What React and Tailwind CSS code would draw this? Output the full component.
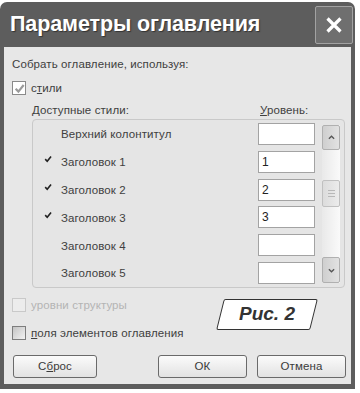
const rows = [
  { name: 'Верхний колонтитул', level: '', checked: false },
  { name: 'Заголовок 1', level: '1', checked: true },
  { name: 'Заголовок 2', level: '2', checked: true },
  { name: 'Заголовок 3', level: '3', checked: true },
  { name: 'Заголовок 4', level: '', checked: false },
  { name: 'Заголовок 5', level: '', checked: false },
];

const Tick = ({ className }) => (
  <svg viewBox="0 0 10 10" className={className}>
    <path d="M1.5 5.2 L4 7.8 L8.8 1.8" fill="none" stroke="currentColor" strokeWidth="2" />
  </svg>
);

const Checkbox = ({ checked = false, disabled = false }) => (
  <div
    className={`w-[14px] h-[14px] border flex items-center justify-center ${
      disabled
        ? 'border-[#c9c9c9] bg-[#ececec]'
        : checked
        ? 'border-[#8a8a8a] bg-white'
        : 'border-[#7d7d7d] bg-gradient-to-br from-[#c4c4c4] to-[#f2f2f2]'
    }`}
  >
    {checked && <Tick className="w-[11px] h-[11px] text-[#9a9a9a]" />}
  </div>
);

const Button = ({ children, className = '' }) => (
  <div
    className={`h-[23px] rounded-[3px] border border-[#6a6a6a] bg-gradient-to-b from-[#fbfbfb] to-[#e2e2e2] flex items-center justify-center text-[#3a3a3a] text-[11.5px] ${className}`}
  >
    {children}
  </div>
);

export default function App() {
  return (
    <div className="w-[360px] h-[393px] bg-white pt-[2px] relative" style={{ fontFamily: '"Liberation Sans", Arial, sans-serif' }}>
      <div className="w-[355px] h-[387px] bg-[#5d5d5d] rounded-t-[7px] flex flex-col px-[4px] pb-[5px]">
        {/* title bar */}
        <div className="h-[45px] flex items-center justify-between pl-[6px]">
          <span className="text-white font-bold text-[21.5px] tracking-[-0.1px] [text-shadow:1px_1px_1px_#333]">
            Параметры оглавления
          </span>
          <div className="w-[38px] h-[38px] mr-[-2px] mt-[1px] border border-[#a2a2a2] rounded-[2px] bg-[#6f6f6f] flex items-center justify-center">
            <svg viewBox="0 0 20 20" className="w-[20px] h-[20px]">
              <path d="M3.5 3.5 L16.5 16.5 M16.5 3.5 L3.5 16.5" stroke="white" strokeWidth="3.2" fill="none" />
            </svg>
          </div>
        </div>

        {/* body */}
        <div className="flex-1 bg-[#e7e7e7] flex flex-col pl-[8px] pr-[5px] text-[11.5px] tracking-[0.1px] text-[#404040]">
          <div className="mt-[10px] leading-[14px]">Собрать оглавление, используя:</div>

          <div className="mt-[10px] flex items-center gap-[5px] leading-[14px]">
            <Checkbox checked />
            <span>
              с<span className="underline">т</span>или
            </span>
          </div>

          <div className="mt-[8px] flex leading-[14px] pl-[20px]">
            <span className="w-[228px]">Доступные стили:</span>
            <span>
              <span className="underline">У</span>ровень:
            </span>
          </div>

          {/* list */}
          <div className="mt-[2px] ml-[20px] w-[313px] h-[169px] border border-[#c9c9c9] rounded-[4px] bg-[#e5e5e5] flex">
            <div className="flex flex-col w-[284px]">
              {rows.map((r) => (
                <div key={r.name} className="h-[28px] flex items-center">
                  <div className="w-[28px] flex justify-center pl-[2px]">
                    {r.checked && <Tick className="w-[8px] h-[8px] text-[#222] -mt-[5px]" />}
                  </div>
                  <span className="w-[197px] pt-[2px]">{r.name}</span>
                  <div className="w-[57px] h-[22px] border border-[#a3a3a3] bg-white flex items-center pl-[3px] text-[12px] text-[#222]">
                    {r.level}
                  </div>
                </div>
              ))}
            </div>
            {/* scrollbar */}
            <div className="ml-[5px] mt-[5px] w-[18px] h-[158px] flex flex-col bg-gradient-to-r from-[#e9e9e9] to-[#fafafa]">
              <div className="h-[25px] rounded-[2px] border border-[#b0b0b0] bg-gradient-to-r from-[#cfcfcf] to-[#e2e2e2] flex items-center justify-center">
                <svg viewBox="0 0 8 5" className="w-[7px] h-[5px]">
                  <path d="M1 4 L4 1 L7 4" stroke="#555" strokeWidth="1.5" fill="none" />
                </svg>
              </div>
              <div className="h-[30px]" />
              <div className="h-[27px] rounded-[2px] border border-[#c0c0c0] bg-gradient-to-r from-[#dcdcdc] to-[#ececec] flex flex-col items-center justify-center gap-[2px]">
                <div className="w-[7px] h-px bg-[#b8b8b8]" />
                <div className="w-[7px] h-px bg-[#b8b8b8]" />
                <div className="w-[7px] h-px bg-[#b8b8b8]" />
              </div>
              <div className="flex-1" />
              <div className="h-[26px] rounded-[2px] border border-[#b0b0b0] bg-gradient-to-r from-[#cfcfcf] to-[#e2e2e2] flex items-center justify-center">
                <svg viewBox="0 0 8 5" className="w-[7px] h-[5px]">
                  <path d="M1 1 L4 4 L7 1" stroke="#555" strokeWidth="1.5" fill="none" />
                </svg>
              </div>
            </div>
          </div>

          <div className="mt-[10px] flex items-center gap-[5px] leading-[14px] text-[#b4b4b4]">
            <Checkbox disabled />
            <span>уровни структуры</span>
          </div>

          <div className="mt-[14px] flex items-center gap-[5px] leading-[14px]">
            <Checkbox />
            <span>
              <span className="underline">п</span>оля элементов оглавления
            </span>
          </div>

          <div className="mt-[15px] flex">
            <Button className="w-[84px] ml-[1px]">
              <span>
                С<span className="underline">б</span>рос
              </span>
            </Button>
            <Button className="w-[89px] ml-[61px]">ОК</Button>
            <Button className="w-[89px] ml-[10px]">Отмена</Button>
          </div>
        </div>
      </div>

      {/* figure label */}
      <div className="absolute left-[220px] top-[299px] w-[94px] h-[31px] flex items-center justify-center">
        <div className="absolute inset-0 -skew-x-[14deg] border-[1.5px] border-[#333] bg-white rounded-[2px]" />
        <span className="relative text-[19px] font-bold italic text-[#333]">Рис. 2</span>
      </div>
    </div>
  );
}
